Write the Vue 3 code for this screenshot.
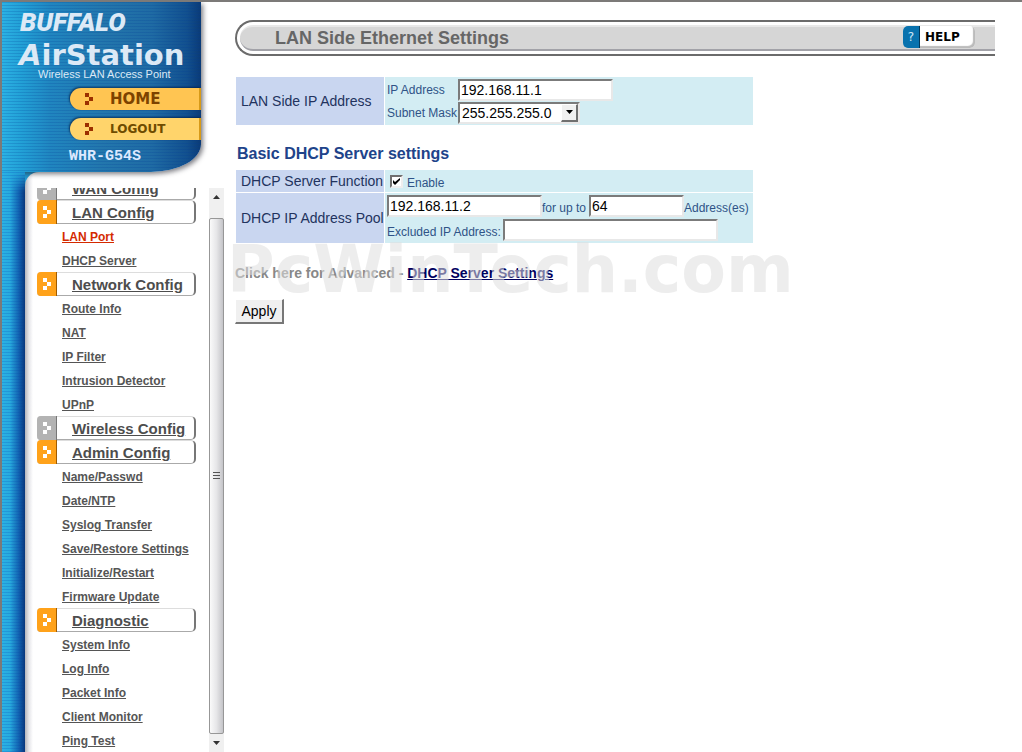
<script setup>
import { ref } from 'vue'

const groups = [
  { title: 'WAN Config', open: false, items: [] },
  { title: 'LAN Config', open: true, items: ['LAN Port', 'DHCP Server'] },
  { title: 'Network Config', open: true, items: ['Route Info', 'NAT', 'IP Filter', 'Intrusion Detector', 'UPnP'] },
  { title: 'Wireless Config', open: false, items: [] },
  {
    title: 'Admin Config',
    open: true,
    items: ['Name/Passwd', 'Date/NTP', 'Syslog Transfer', 'Save/Restore Settings', 'Initialize/Restart', 'Firmware Update'],
  },
  { title: 'Diagnostic', open: true, items: ['System Info', 'Log Info', 'Packet Info', 'Client Monitor', 'Ping Test'] },
]
const current = 'LAN Port'

const ip = ref('192.168.11.1')
const mask = ref('255.255.255.0')
const dhcp = ref(true)
const poolStart = ref('192.168.11.2')
const poolSize = ref('64')
const excluded = ref('')
</script>

<template>
  <div class="page">
    <aside class="side">
      <header class="brand">
        <div class="buffalo">BUFFALO</div>
        <div class="product"><i>A</i>irStation</div>
        <div class="tagline">Wireless LAN Access Point</div>
        <a class="pill home" href="#home">
          <svg width="8" height="12" viewBox="0 0 8 12" aria-hidden="true"><path d="M0 0h4v4H0zM4 4h4v4H4zM0 8h4v4H0z" fill="#9c3000" /></svg>
          <span>HOME</span>
        </a>
        <a class="pill logout" href="#logout">
          <svg width="8" height="12" viewBox="0 0 8 12" aria-hidden="true"><path d="M0 0h4v4H0zM4 4h4v4H4zM0 8h4v4H0z" fill="#9c3000" /></svg>
          <span>LOGOUT</span>
        </a>
        <div class="model">WHR-G54S</div>
      </header>
      <div class="lower">
        <div class="panel">
          <nav class="menu">
            <ul class="list">
              <li v-for="g in groups" :key="g.title">
                <a class="group" href="#">
                  <span class="mark" :class="{ closed: !g.open }">
                    <svg width="8" height="12" viewBox="0 0 8 12" aria-hidden="true"><path d="M0 0h4v4H0zM4 4h4v4H4zM0 8h4v4H0z" fill="#fff" /></svg>
                  </span>
                  <span class="label">{{ g.title }}</span>
                </a>
                <a v-for="i in g.items" :key="i" class="item" :class="{ current: i === current }" href="#">{{ i }}</a>
              </li>
            </ul>
          </nav>
          <div class="scroll" aria-hidden="true">
            <div class="arrow top"><svg width="7" height="4" viewBox="0 0 7 4"><path d="M3.500 0L7 4H0z" fill="#333" /></svg></div>
            <div class="thumb"><svg width="7" height="8" viewBox="0 0 7 8"><path d="M0 0h7v1H0zM0 3h7v1H0zM0 6h7v1H0z" fill="#555" /></svg></div>
            <div class="arrow"><svg width="7" height="4" viewBox="0 0 7 4"><path d="M0 0h7L3.500 4z" fill="#333" /></svg></div>
          </div>
        </div>
      </div>
    </aside>

    <main class="main">
      <div class="titlebar">
        <div class="titlefill">
          <h1>LAN Side Ethernet Settings</h1>
          <button class="help" type="button">
            <span class="q">?</span><span class="word">HELP</span>
          </button>
        </div>
      </div>

      <form class="form" @submit.prevent>
        <table class="grid">
          <tbody>
            <tr>
              <th scope="row">LAN Side IP Address</th>
              <td>
                <div class="line">
                  <label class="fixed" for="ip">IP Address</label>
                  <input id="ip" v-model="ip" class="box medium" type="text" />
                </div>
                <div class="line">
                  <label class="fixed" for="mask">Subnet Mask</label>
                  <span class="pick">
                    <select id="mask" v-model="mask">
                      <option>255.255.255.0</option>
                      <option>255.255.0.0</option>
                      <option>255.0.0.0</option>
                    </select>
                    <span class="drop"><svg width="7" height="4" viewBox="0 0 7 4" aria-hidden="true"><path d="M0 0h7L3.500 4z" /></svg></span>
                  </span>
                </div>
              </td>
            </tr>
          </tbody>
        </table>

        <h2>Basic DHCP Server settings</h2>

        <table class="grid">
          <tbody>
            <tr>
              <th scope="row">DHCP Server Function</th>
              <td>
                <div class="check">
                  <input id="dhcp" v-model="dhcp" type="checkbox" />
                  <svg class="tick" width="7" height="7" viewBox="0 0 7 7" aria-hidden="true"><path d="M0 2v3l2 2 5-5V0L2 4z" /></svg>
                  <label for="dhcp">Enable</label>
                </div>
              </td>
            </tr>
            <tr>
              <th scope="row">DHCP IP Address Pool</th>
              <td>
                <div class="line tall">
                  <input v-model="poolStart" class="box medium" type="text" aria-label="First address" />
                  <label class="mid" for="size">for up to</label>
                  <input id="size" v-model="poolSize" class="box short" type="text" />
                  <span class="after">Address(es)</span>
                </div>
                <div class="line tall">
                  <label class="wide" for="ex">Excluded IP Address:</label>
                  <input id="ex" v-model="excluded" class="box long" type="text" />
                </div>
              </td>
            </tr>
          </tbody>
        </table>

        <div class="advanced">
          <p>Click here for Advanced - <a href="#dhcp">DHCP Server Settings</a></p>
          <div class="watermark">PcWinTech.com</div>
        </div>
        <button class="apply" type="submit">Apply</button>
      </form>
    </main>
  </div>
</template>

<style>
body {
  margin: 0;
  overflow: hidden;
  background: #fff;
}
</style>

<style scoped>
* {
  box-sizing: border-box;
}
.page {
  display: flex;
  height: 100vh;
  overflow: hidden;
  border-top: 2px solid #7c7a78;
  border-left: 2px solid #7c7a78;
  font-family: "Liberation Sans", Arial, sans-serif;
}
.side {
  display: flex;
  flex-direction: column;
  width: 223px;
  flex: none;
}
.brand {
  position: relative;
  z-index: 1;
  display: flex;
  flex-direction: column;
  width: 199px;
  height: 170px;
  padding-top: 5px;
  flex: none;
  border-radius: 0 0 50px 0 / 0 0 28px 0;
  background:
    repeating-linear-gradient(180deg, rgba(0, 60, 150, 0.2) 0 1px, transparent 1px 3px),
    linear-gradient(90deg, #2cb2e4 0, #22a0d6 20px, #2086c0 48px, #2377ad 100px, #1f6ba4 150px, #12508e 185px, #0a3a76 199px);
  box-shadow: 2px 2px 5px rgba(40, 40, 50, 0.6);
}
.buffalo {
  padding-left: 18px;
  color: #dce9f6;
  font: italic 900 26px/30px Roboto, sans-serif;
}
.product {
  padding-left: 17px;
  color: #dce9f6;
  font: bold 29px/36px "DejaVu Sans", sans-serif;
}
.tagline {
  padding-left: 36px;
  margin-top: -5px;
  color: #dce9f6;
  font-size: 11px;
  line-height: 12px;
}
.pill {
  display: flex;
  align-items: center;
  width: 131px;
  height: 22px;
  margin: 8px 0 0 68px;
  padding-left: 15px;
  border-radius: 11px 0 0 11px;
  border-right: 2px solid #d79a18;
  background: #ffc552;
  box-shadow: -1px -1px 2px rgba(0, 30, 70, 0.7);
  text-decoration: none;
  flex: none;
}
.pill svg {
  margin-right: 17px;
}
.home {
  color: #7d4300;
  font: bold 15px/22px "DejaVu Sans", sans-serif;
}
.logout {
  color: #6f4c00;
  background: #ffd46b;
  font: 900 12px/22px "DejaVu Sans", sans-serif;
}
.model {
  margin: 9px 0 0 67px;
  color: #dce9ff;
  font: bold 15px/16px "Liberation Mono", monospace;
}
.lower {
  position: relative;
  display: flex;
  flex: 1;
  min-height: 0;
  padding-left: 23px;
  background: linear-gradient(90deg, #2cb2e4 0, #22a0d6 20px, #2086c0 40px) 0 0 / 40px 100% no-repeat;
}
.lower::before,
.lower::after {
  position: absolute;
  z-index: 2;
  top: 0;
  bottom: 0;
  left: 0;
  width: 23px;
  content: "";
}
.lower::before {
  background:
    repeating-linear-gradient(180deg, rgba(0, 60, 180, 0.2) 0 1px, transparent 1px 3px),
    linear-gradient(90deg, #2cb2e4 0, #22a0d6 20px, #2086c0 48px);
}
.lower::after {
  background: linear-gradient(90deg, transparent 8px, rgba(10, 70, 160, 0.7) 17px, #08367c 23px);
  mask-image: linear-gradient(180deg, transparent, #000 20px);
}
.panel {
  display: flex;
  flex: 1;
  min-width: 0;
  padding: 16px 1px 0 12px;
  border-radius: 14px 0 0 0;
  background: linear-gradient(90deg, #b4b4ba, #e6e6ea 4px, #fff 8px);
}
.menu {
  flex: 1;
  overflow: hidden;
}
.list {
  margin: -12px 0 0;
  padding: 0;
  list-style: none;
}
.group {
  display: flex;
  width: 159px;
  height: 24px;
  border: 1px solid #ccc;
  border-top-color: #ddd;
  border-right: 2px solid #777;
  border-bottom-color: #aaa;
  border-left: 0;
  border-radius: 4px 5px 5px 4px;
  background: #fff;
  color: #4d4d4d;
  font-size: 15px;
  font-weight: bold;
  line-height: 23px;
}
.mark {
  display: flex;
  align-items: center;
  justify-content: center;
  width: 20px;
  height: 24px;
  margin: -1px 15px 0 0;
  border-right: 1px solid #a05c00;
  border-radius: 4px 0 0 4px;
  background: #ffa21a;
}
.mark.closed {
  border-right-color: #777;
  background: #b3b3b3;
}
.item {
  display: block;
  height: 24px;
  padding-left: 25px;
  color: #555;
  font-size: 12px;
  font-weight: bold;
  line-height: 26px;
  white-space: nowrap;
}
.item.current {
  color: #d42a00;
}
.scroll {
  display: flex;
  flex-direction: column;
  width: 15px;
  flex: none;
  background: #f0f0f0;
}
.arrow {
  display: flex;
  align-items: center;
  justify-content: center;
  height: 18px;
  flex: none;
}
.arrow.top {
  margin-bottom: 12px;
}
.thumb {
  display: flex;
  align-items: center;
  justify-content: center;
  flex: 1;
  border: 1px solid #979797;
  border-radius: 2px;
  background: linear-gradient(90deg, #fafafa, #e6e6e8 50%, #c4c4c8);
}
.main {
  flex: 1;
  min-width: 0;
  padding: 18px 27px 0 10px;
}
.titlebar {
  height: 36px;
  padding: 3px 0 3px 3px;
  border: 2px solid #6b6b6b;
  border-right: 0;
  border-radius: 18px 0 0 18px;
}
.titlefill {
  display: flex;
  align-items: center;
  justify-content: space-between;
  height: 26px;
  padding: 0 20px 0 35px;
  border-top: 2px solid #e8e8e8;
  border-bottom: 2px solid #a2a2a8;
  border-radius: 13px 0 0 13px;
  background: #d6d6d6;
}
h1 {
  margin: 0;
  color: #666;
  font-size: 18px;
  line-height: 22px;
}
.help {
  display: flex;
  align-items: center;
  width: 72px;
  height: 22px;
  margin-top: -2px;
  padding: 0;
  overflow: hidden;
  border: 0;
  border-radius: 5px;
  background: #fff;
  box-shadow: inset -2px -2px 1px #bbb;
}
.q {
  width: 17px;
  border-right: 1px solid #00395c;
  background: #0872ae;
  color: #cfe8f8;
  font: 12px/22px "DejaVu Sans", sans-serif;
}
.word {
  padding-left: 5px;
  color: #000;
  font: 900 12px/20px "DejaVu Sans", sans-serif;
}
.form {
  padding-top: 20px;
}
.grid {
  width: 519px;
  border-spacing: 1px;
  color: #2f5387;
}
th {
  width: 148px;
  padding: 0 0 0 5px;
  background: #c9d6f0;
  color: #22335e;
  font-size: 14px;
  font-weight: normal;
  text-align: left;
  white-space: nowrap;
}
td {
  padding: 1px 0 1px 2px;
  background: #d3edf3;
  font-size: 12px;
}
.line {
  display: flex;
  align-items: center;
  height: 23px;
  white-space: nowrap;
}
.line.tall {
  height: 24px;
}
.fixed {
  width: 71px;
}
.wide {
  width: 116px;
  padding-top: 4px;
}
.box {
  height: 22px;
  padding: 0 1px;
  border: 2px solid #e8e8e8;
  border-top-color: #7b7b7b;
  border-left-color: #7b7b7b;
  background: #fff;
  color: #000;
  font: 14px "Liberation Sans", Arial, sans-serif;
}
.medium {
  width: 155px;
}
.short {
  width: 95px;
}
.long {
  width: 215px;
}
.mid {
  width: 47px;
}
.line .after,
.line .mid {
  padding-top: 4px;
}
.pick {
  position: relative;
  width: 122px;
  height: 22px;
}
select {
  width: 100%;
  height: 100%;
  padding: 0 2px;
  appearance: none;
  border: 2px solid #e8e8e8;
  border-top-color: #7b7b7b;
  border-left-color: #7b7b7b;
  border-radius: 0;
  background: #fff;
  color: #000;
  font: 14px "Liberation Sans", Arial, sans-serif;
}
.drop {
  position: absolute;
  top: 2px;
  right: 2px;
  display: flex;
  align-items: center;
  justify-content: center;
  width: 17px;
  height: 18px;
  border: 1px solid #fff;
  border-right: 2px solid #707070;
  border-bottom: 2px solid #707070;
  background: #f0f0f0;
  pointer-events: none;
}
h2 {
  margin: 19px 0 6px 2px;
  color: #20438a;
  font-size: 16px;
  line-height: 18px;
}
.check {
  display: flex;
  align-items: center;
  position: relative;
  height: 20px;
  gap: 4px;
  padding-left: 3px;
}
.check input {
  width: 13px;
  height: 13px;
  margin: 0;
  appearance: none;
  border: 2px solid #eee;
  border-top-color: #707070;
  border-left-color: #707070;
  background: #fff;
}
.tick {
  position: absolute;
  top: 7px;
  left: 6px;
  display: none;
  pointer-events: none;
}
input:checked + .tick {
  display: block;
}
.check label {
  padding-top: 3px;
}
.advanced {
  position: relative;
  height: 55px;
  padding-top: 19px;
}
.advanced p {
  margin: 0;
  color: #888;
  font-size: 14px;
  font-weight: bold;
  line-height: 20px;
}
.advanced a {
  color: #00005e;
}
.watermark {
  position: absolute;
  top: -12px;
  left: -8px;
  color: rgba(222, 222, 222, 0.55);
  font: bold 65px/75px "DejaVu Sans", sans-serif;
  pointer-events: none;
}
.apply {
  width: 49px;
  height: 25px;
  padding: 0;
  border: 1px solid #fff;
  border-right: 2px solid #777;
  border-bottom: 2px solid #777;
  background: #f0f0f0;
  color: #000;
  font: 14px "Liberation Sans", Arial, sans-serif;
}
</style>
